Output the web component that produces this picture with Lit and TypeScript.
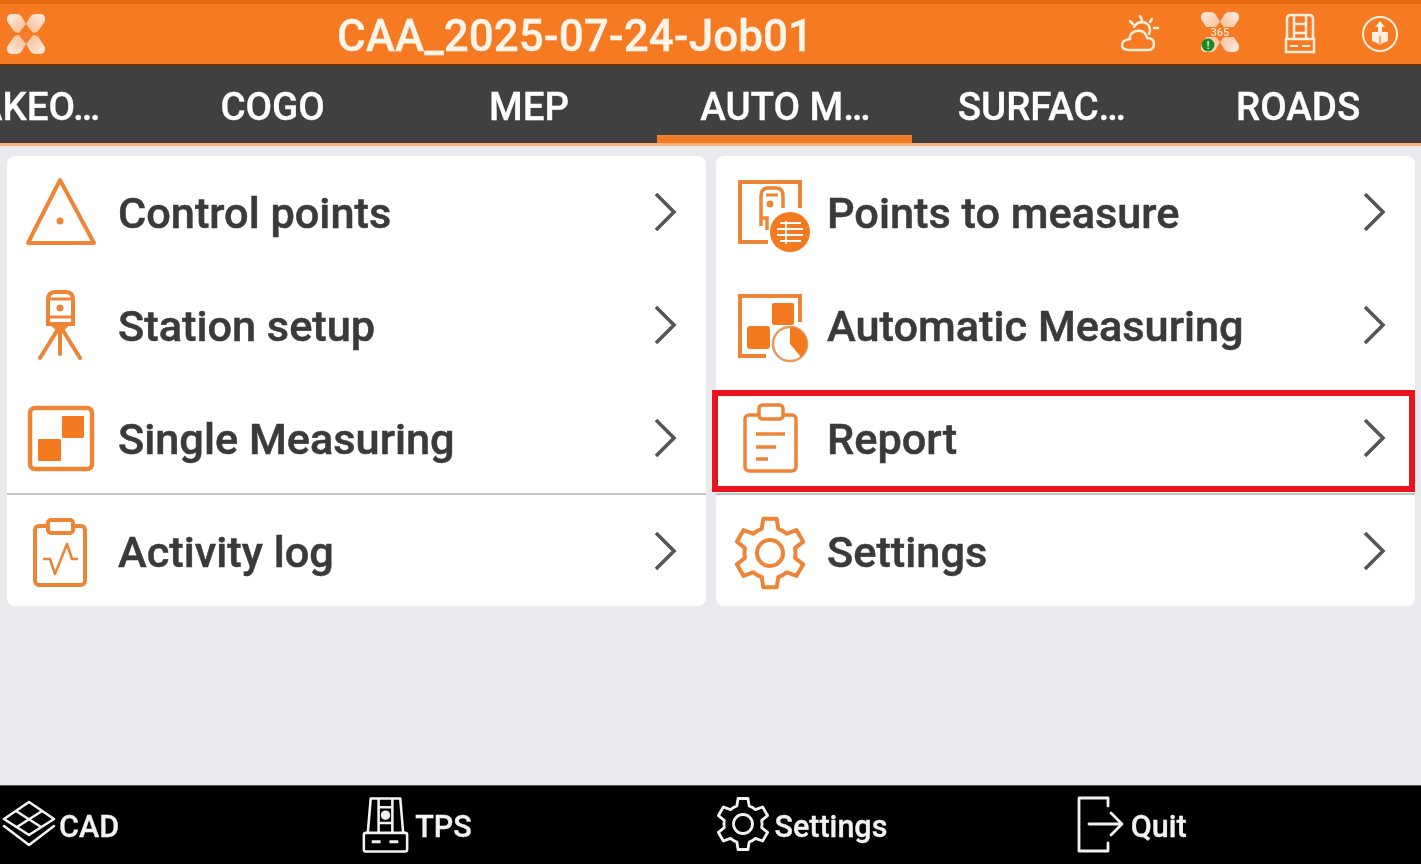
import { LitElement, html, css, svg } from "lit";
import { customElement } from "lit/decorators.js";

function gearPath(cx: number, cy: number, ro: number, rr: number) {
  const pt = (r: number, deg: number) => {
    const a = (deg * Math.PI) / 180;
    return `${(cx + r * Math.cos(a)).toFixed(2)} ${(cy + r * Math.sin(a)).toFixed(2)}`;
  };
  let d = "";
  for (let i = 0; i < 6; i++) {
    const c = i * 60 - 90;
    d += `${i === 0 ? "M" : "L"}${pt(rr, c - 19)} L${pt(ro, c - 11)} L${pt(ro, c + 11)} L${pt(rr, c + 19)} `;
    d += `A${rr} ${rr} 0 0 1 ${pt(rr, c + 41)} `;
  }
  return d + "Z";
}

const O = "#ee8435";
const F = "#f47a20";

const icons: Record<string, unknown> = {
  triangle: svg`<path d="M39 6 L7 69 H73 Z" fill="none" stroke=${O} stroke-width="4" stroke-linejoin="round"/><circle cx="39" cy="47" r="3.5" fill=${O}/>`,
  station: svg`<path d="M27 37 V13 Q27 5 34 5 H45 Q52 5 52 13 V37 Z" fill="none" stroke=${O} stroke-width="4"/>
    <path d="M27 12 H52 M27 30 H52" stroke=${O} stroke-width="3"/><circle cx="39" cy="21" r="3.5" fill=${O}/>
    <path d="M28 37 H50 L42 44 H36 Z" fill=${O}/>
    <path d="M37 42 L19 71 M39 42 V67 M41 42 L59 71" fill="none" stroke=${O} stroke-width="4" stroke-linecap="round"/>`,
  single: svg`<rect x="9" y="8" width="62" height="61" rx="5" fill="none" stroke=${O} stroke-width="4.5"/>
    <rect x="41" y="16" width="22" height="22" rx="1" fill=${F}/><rect x="17" y="39" width="23" height="22" rx="1" fill=${F}/>`,
  activity: svg`<rect x="14" y="13" width="50" height="59" rx="4" fill="none" stroke=${O} stroke-width="4"/>
    <rect x="27" y="7" width="25" height="13" rx="3" fill="#fff" stroke=${O} stroke-width="4"/>
    <path d="M22 46 H29 L34 61 L46 31 L51 46 H57" fill="none" stroke=${O} stroke-width="2.5" stroke-linejoin="round"/>`,
  points: svg`<path d="M70 34 V8 H10 V68 H38" fill="none" stroke=${O} stroke-width="4"/>
    <path d="M31 52 V22 Q31 14 38 14 H46 Q53 14 53 22 V34 M31 44 H37 V56" fill="none" stroke=${O} stroke-width="3.5"/>
    <path d="M36 21 H48" stroke=${O} stroke-width="3"/><circle cx="40" cy="30" r="3.5" fill=${O}/>
    <circle cx="60" cy="58" r="20" fill=${F}/>
    <path d="M50 49 H71 M47 55 H73 M47 61 H73 M50 67 H71 M56 47 V70" stroke="#fff" stroke-width="1.8" fill="none"/>`,
  auto: svg`<path d="M70 35 V9 H10 V69 H36" fill="none" stroke=${O} stroke-width="4"/>
    <rect x="42" y="16" width="22" height="22" rx="2" fill=${F}/><rect x="17" y="39" width="23" height="23" rx="3" fill=${F}/>
    <circle cx="60" cy="57" r="17" fill="#fff" stroke="#e49a66" stroke-width="2.5"/>
    <path d="M60 40 A17 17 0 0 1 71 70 L60 57 Z" fill=${F}/>`,
  report: svg`<rect x="15" y="15" width="51" height="56" rx="4" fill="none" stroke=${O} stroke-width="3.5"/>
    <rect x="29" y="5" width="24" height="14" rx="3.5" fill="#fff" stroke=${O} stroke-width="3.5"/>
    <path d="M26 34 H55 M26 47 H46 M26 59 H38" stroke=${O} stroke-width="3.5"/>`,
  gear: svg`<path d="${gearPath(40, 40, 35, 25.5)}" fill="none" stroke=${O} stroke-width="4" stroke-linejoin="round"/>
    <circle cx="40" cy="40" r="13" fill="none" stroke=${O} stroke-width="4"/>`,
};

const petals = (id: string) => svg`<defs>
    <linearGradient id="${id}a" x1="0" y1="0" x2="1" y2="1"><stop offset="0" stop-color="#fdeee2"/><stop offset="1" stop-color="#f6b98d"/></linearGradient>
    <linearGradient id="${id}b" x1="1" y1="1" x2="0" y2="0"><stop offset="0" stop-color="#fdeee2"/><stop offset="1" stop-color="#f6b98d"/></linearGradient>
    <linearGradient id="${id}c" x1="1" y1="0" x2="0" y2="1"><stop offset="0" stop-color="#fdeee2"/><stop offset="1" stop-color="#f6b98d"/></linearGradient>
    <linearGradient id="${id}d" x1="0" y1="1" x2="1" y2="0"><stop offset="0" stop-color="#fdeee2"/><stop offset="1" stop-color="#f6b98d"/></linearGradient>
  </defs>
  <path d="M1 4 Q2 0 6 0 H11 Q14 0 16 3 L20 10 L13 19 Q9 19 7 16 L1 7 Z" fill="url(#${id}a)"/>
  <path d="M39 4 Q38 0 34 0 H29 Q26 0 24 3 L20 10 L27 19 Q31 19 33 16 L39 7 Z" fill="url(#${id}c)"/>
  <path d="M1 36 Q2 40 6 40 H11 Q14 40 16 37 L20 30 L13 21 Q9 21 7 24 L1 33 Z" fill="url(#${id}d)"/>
  <path d="M39 36 Q38 40 34 40 H29 Q26 40 24 37 L20 30 L27 21 Q31 21 33 24 L39 33 Z" fill="url(#${id}b)"/>`;

interface Item { icon: string; label: string; boxed?: boolean }
const left: Item[] = [
  { icon: "triangle", label: "Control points" },
  { icon: "station", label: "Station setup" },
  { icon: "single", label: "Single Measuring" },
  { icon: "activity", label: "Activity log" },
];
const right: Item[] = [
  { icon: "points", label: "Points to measure" },
  { icon: "auto", label: "Automatic Measuring" },
  { icon: "report", label: "Report", boxed: true },
  { icon: "gear", label: "Settings" },
];
const tabs = ["STAKEO…", "COGO", "MEP", "AUTO M…", "SURFAC…", "ROADS"];

@customElement("app-root")
export class AppRoot extends LitElement {
  static styles = css`
    :host { display: flex; flex-direction: column; height: 864px; width: 1421px; overflow: hidden; background: #e9eaee;
      font-family: Roboto, "Liberation Sans", sans-serif; font-weight: 500; filter: blur(0.45px); }
    .header { box-sizing: border-box; height: 66px; display: flex; align-items: center; flex: none;
      background: #f57a22; border-top: 4px solid #e6670f; border-bottom: 2px solid #6e360c; }
    .logo { box-sizing: border-box; width: 54px; padding-right: 2px; display: flex; justify-content: center; flex: none; }
    .title { flex: 1; text-align: center; color: #fdf4ea; font-size: 44px; padding: 3px 4px 0 0; -webkit-text-stroke: 0.3px #fdf4ea; }
    .status { display: flex; flex: none; width: 321px; }
    .status div { width: 80px; display: flex; justify-content: center; }
    .tabs { box-sizing: border-box; height: 80px; flex: none; display: flex; background: #404040; border-bottom: 3px solid #f6b27f; overflow: hidden; }
    .tab { position: relative; flex: none; width: 256.4px; box-sizing: border-box; display: flex; align-items: center; justify-content: center;
      color: #fff; font-size: 38.5px; white-space: nowrap; padding: 4px 0 0; -webkit-text-stroke: 0.3px #fff; }
    .tab:first-child { margin-left: -112px; }
    .tab.active::after { content: ""; position: absolute; left: 0; right: 2px; bottom: 0; height: 8px; background: linear-gradient(#e08a4c, #f47a20 35%); }
    .main { flex: 1; display: grid; grid-template-columns: 699px 699px; gap: 10px; padding: 10px 6px 0 7px; align-content: start; }
    .card { background: #fff; border-radius: 8px; height: 450px; box-sizing: border-box; padding-top: 1px; display: flex; flex-direction: column; }
    .row { position: relative; flex: none; height: 113px; display: flex; align-items: center; padding: 0 29px 0 14px; gap: 17px; color: #3a3a3a; font-size: 43.3px; -webkit-text-stroke: 0.5px #3a3a3a; }
    .row.third::after { content: ""; position: absolute; left: 0; right: 0; bottom: 1px; height: 2px; background: #c6c6c6; }
    .row .label { flex: 1; }
    .chev { margin-bottom: 3px; }
    .boxed { position: absolute; z-index: 1; top: 7px; left: -4px; right: 0; bottom: 4px; border: 6.5px solid #e8141e; pointer-events: none; }
    .footer { box-sizing: border-box; height: 79px; flex: none; background: #000; border-top: 1px solid #555; display: flex; color: #f2f2f2; font-size: 30.5px; -webkit-text-stroke: 0.3px #f2f2f2; }
    .fitem { flex: 1 1 0; display: flex; align-items: center; }
    .fitem span { padding-top: 2px; }
    svg { display: block; flex: none; -webkit-text-stroke: 0; }
  `;

  private row(it: Item, idx: number) {
    return html`<div class="row ${idx === 2 ? "third" : ""}">
      <svg width="80" height="80" viewBox="0 0 80 80">${icons[it.icon]}</svg>
      <span class="label">${it.label}</span>
      <svg class="chev" width="24" height="40" viewBox="0 0 24 40"><path d="M3 2 L21 20 L3 38" fill="none" stroke="#555" stroke-width="3.6"/></svg>
      ${it.boxed ? html`<div class="boxed"></div>` : null}
    </div>`;
  }

  render() {
    return html`
      <div class="header">
        <div class="logo"><svg width="40" height="40" viewBox="0 0 40 40">${petals("l")}
          <text x="20" y="24" text-anchor="middle" font-size="11" fill="#f08a45">s</text></svg></div>
        <div class="title">CAA_2025-07-24-Job01</div>
        <div class="status">
          <div><svg width="44" height="44" viewBox="0 0 44 44" fill="none" stroke="#fdeede" stroke-width="2.5" stroke-linecap="round" stroke-linejoin="round">
            <path d="M11 38 H30 Q36 38 36 32 Q36 26 29 26 Q27 17 18 19 Q11 21 12 27 Q4 28 4 33 Q4 38 11 38 Z"/>
            <path d="M16 15 Q20 8 28 11 Q34 15 31 22"/><path d="M22 4 L24 8 M12 9 L15 12 M34 7 L32 10 M40 16 H36"/></svg></div>
          <div><svg width="40" height="40" viewBox="0 0 40 40" style="overflow:visible">${petals("s")}
            <rect x="5" y="15" width="30" height="10" fill="#f57a22"/>
            <text x="20" y="24" text-anchor="middle" font-size="11" fill="#fbe3d2">365</text>
            <circle cx="8" cy="33" r="6.5" fill="#1d8a22"/><text x="8" y="37" text-anchor="middle" font-size="10" fill="#fff">!</text></svg></div>
          <div><svg width="44" height="44" viewBox="0 0 44 44" fill="none" stroke="#fdeede" stroke-width="2.5">
            <path d="M9 26 V7 Q9 3 13 3 H31 Q35 3 35 7 V26"/><path d="M16 4 V26 M28 4 V26 M16 12 H28 M16 21 H28"/>
            <rect x="8" y="27" width="28" height="13" fill="#f57a22"/><path d="M12 34 H20 M24 34 H32" stroke-width="2"/></svg></div>
          <div><svg width="44" height="44" viewBox="0 0 44 44">
            <circle cx="22" cy="22" r="17" fill="none" stroke="#fdeede" stroke-width="2"/>
            <path d="M22 9 L27 15 H24 V20 H30 V29 Q26 30 22 33 Q18 30 14 29 V20 H20 V15 H17 Z" fill="#fdeede"/>
            <path d="M22 24 V33" stroke="#f57a22" stroke-width="1.2"/></svg></div>
        </div>
      </div>
      <div class="tabs">${tabs.map((t, i) => html`<div class="tab ${i === 3 ? "active" : ""}">${t}</div>`)}</div>
      <div class="main">
        <div class="card">${left.map((it, i) => this.row(it, i))}</div>
        <div class="card">${right.map((it, i) => this.row(it, i))}</div>
      </div>
      <div class="footer">
        <div class="fitem"><svg width="59" height="60" viewBox="0 0 59 60" fill="none" stroke="#f2f2f2" stroke-width="2.6" stroke-linejoin="round" stroke-linecap="round">
          <path d="M29 7 L54 24 L29 40 L4 24 Z M16 16 L41 32 M42 16 L17 32"/><path d="M4 31 L29 50 L54 31"/></svg><span>CAD</span></div>
        <div class="fitem"><svg width="60" height="60" viewBox="0 0 61 60" fill="none" stroke="#f2f2f2" stroke-width="2.6" stroke-linejoin="round">
          <path d="M13 38 L16 3 H46 L49 38 M24 3 V38 M38 3 V38 M24 12 H38 M24 28 H38"/><circle cx="31" cy="20" r="3.5" fill="#f2f2f2"/>
          <rect x="9" y="38" width="44" height="19" rx="2"/><path d="M17 47 H26 M35 47 H44" stroke-width="3"/></svg><span>TPS</span></div>
        <div class="fitem"><svg width="64" height="60" viewBox="0 0 64 60" fill="none" stroke="#f2f2f2" stroke-width="2.8" stroke-linejoin="round">
          <path d="${gearPath(32, 29, 26, 19)}"/><circle cx="32" cy="29" r="9.5"/></svg><span>Settings</span></div>
        <div class="fitem"><svg width="65" height="60" viewBox="0 0 65 60" fill="none" stroke="#f2f2f2" stroke-width="2.8" stroke-linecap="round" stroke-linejoin="round">
          <path d="M42 11 V3 H13 V56 H42 V48"/><path d="M23 29 H55 M45 18 L56 29 L45 40"/></svg><span>Quit</span></div>
      </div>
    `;
  }
}
